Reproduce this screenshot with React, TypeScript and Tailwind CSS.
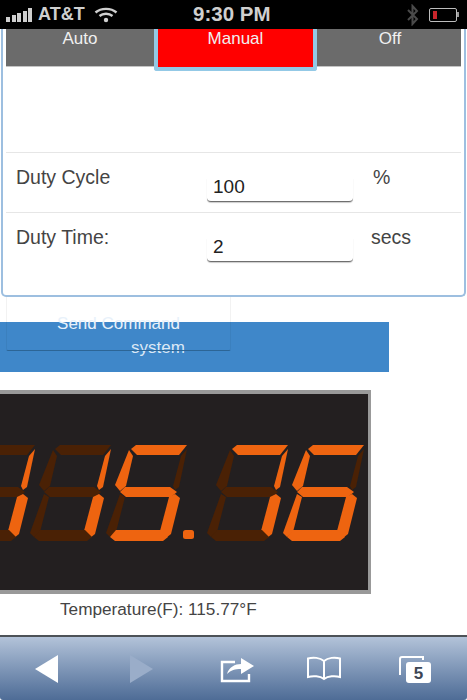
const LIT = "#ee6410";
const DIM = "#4a2105";

// one digit's segments, traced from the right-most digit on the display
const SEGMENTS: Record<string, string> = {
  a: "308,449 313,445 364,445 356,455 314,455",
  f: "306,450 310,456 303,486 297,491 292,485",
  b: "364,449 358,456 350,486 352,490 356,487",
  g: "297,492 302,487 347,487 354,492 348,497 303,497",
  e: "297,494 302,497 293,532 287,537 283,533",
  c: "352,494 357,498 348,534 343,538 337,531 346,497",
  d: "287,537 293,530 338,530 345,537 340,541 292,541",
};

const DIGITS = [
  { dx: -329, on: "bc" },
  { dx: -253, on: "bc" },
  { dx: -177, on: "afgcd" },
  { dx: -76, on: "abc" },
  { dx: 0, on: "afgecd" },
];

function SevenSegment() {
  return (
    <svg viewBox="0 394 368 196" className="block h-[196px] w-[368px]">
      {DIGITS.map((digit) => (
        <g key={digit.dx} transform={`translate(${digit.dx} 0)`}>
          {Object.entries(SEGMENTS).map(([name, points]) => (
            <polygon key={name} points={points} fill={digit.on.includes(name) ? LIT : DIM} />
          ))}
        </g>
      ))}
      <rect x="183" y="530" width="11" height="9" rx="2.5" fill={LIT} />
    </svg>
  );
}

function StatusBar() {
  return (
    <div className="flex h-[29px] shrink-0 items-center bg-black pl-[6px] text-[#cfcfcf]">
      <div className="flex items-end gap-[1.5px]">
        <div className="h-[5px] w-[4px] bg-[#cfcfcf]" />
        <div className="h-[7px] w-[4px] bg-[#cfcfcf]" />
        <div className="h-[9px] w-[4px] bg-[#cfcfcf]" />
        <div className="h-[11px] w-[4px] bg-[#cfcfcf]" />
        <div className="h-[14px] w-[4px] bg-[#cfcfcf]" />
      </div>
      <span className="ml-[6px] w-[56px] text-[18px] font-bold">AT&amp;T</span>
      <svg viewBox="0 0 24 16" className="h-[16px] w-[24px]" fill="none" stroke="#cfcfcf" strokeWidth="2.4">
        <path d="M1.5 5.5C7 .6 17 .6 22.5 5.5" />
        <path d="M5.5 9C9 6 15 6 18.5 9" />
        <circle cx="12" cy="13" r="2.2" fill="#cfcfcf" stroke="none" />
      </svg>
      <span className="ml-[75px] w-[77px] pb-[1px] text-[20.5px] font-bold leading-[24px] whitespace-nowrap">9:30 PM</span>
      <svg viewBox="0 0 12 22" className="ml-[137px] h-[22px] w-[12px]" fill="none" stroke="#4a4a4a" strokeWidth="2">
        <path d="M1 6l9 9-4.500 5V2l4.500 5-9 9" />
      </svg>
      <div className="ml-[10px] flex items-center">
        <div className="flex h-[14px] w-[28px] items-center rounded-[2px] border border-[#bdbdbd] pl-[3px]">
          <div className="h-[8px] w-[4px] bg-[#c8252b]" />
        </div>
        <div className="h-[5px] w-[2px] bg-[#9a9a9a]" />
      </div>
    </div>
  );
}

function FormRow({ label, value, unit, unitClass }: { label: string; value: string; unit: string; unitClass: string }) {
  return (
    <div className="flex h-[60px] items-start border-t border-[#e6e6e6] pl-[10px] text-[19.5px] text-[#444]">
      <span className="mt-[12px] w-[191px] leading-[24px]">{label}</span>
      <input
        defaultValue={value}
        className="mt-[25px] h-[24px] w-[146px] rounded-b-[4px] border-b border-[#6f6f6f] bg-white px-[6px] pb-[5px] text-[19px] leading-[18px] text-[#222] shadow-[0_1px_1px_rgba(0,0,0,0.2)]"
      />
      <span className={`mt-[12px] leading-[24px] ${unitClass}`}>{unit}</span>
    </div>
  );
}

function ControlPanel() {
  return (
    <div className="ml-px h-[268px] w-[465px] shrink-0 rounded-b-[5px] border-x-2 border-b-2 border-[#9dbfe0] px-[3px]">
      <div className="flex h-[123px] items-start text-[17px] leading-[18px] text-[#f0f0f0]">
        <div className="h-[38px] w-[149px] border-b border-[#c4c4c4] bg-[#6b6b6b] pt-[1px] text-center">Auto</div>
        <div className="h-[42px] w-[164px] rounded-b-[3px] border-x-[4px] border-b-[4px] border-[#93c9e6] bg-[#ff0000] pt-[1px] text-center">
          Manual
        </div>
        <div className="h-[38px] w-[145px] border-b border-[#c4c4c4] bg-[#6b6b6b] pl-[2px] pt-[1px] text-center">Off</div>
      </div>
      <FormRow label="Duty Cycle" value="100" unit="%" unitClass="ml-[20px]" />
      <FormRow label="Duty Time:" value="2" unit="secs" unitClass="ml-[18px]" />
    </div>
  );
}

function SendCommand() {
  return (
    <div className="flex shrink-0 flex-col">
      <button className="relative z-10 ml-[6px] h-[54px] w-[225px] rounded-b-[2px] border-x border-b border-x-[#0000000d] border-b-[#2c6596] pt-[1px] text-[17px] leading-[52px] text-[#e8f1fa]">
        Send Command
      </button>
      <div className="-mt-[29px] h-[50px] w-[389px] bg-[#3f87c9] pl-[131px] pt-[16px] text-[17px] leading-[20px] text-[#dbe8f5]">
        system
      </div>
    </div>
  );
}

function Toolbar() {
  return (
    <div className="flex h-[65px] shrink-0 items-center rounded-b-[3px] border-t-2 border-[#4d5257] bg-gradient-to-b from-[#b3c3d9] to-[#4e6c96]">
      <svg viewBox="0 0 23 28" className="ml-[35px] h-[28px] w-[23px]">
        <polygon points="0,14 23,0 23,28" fill="#ffffff" />
      </svg>
      <svg viewBox="0 0 23 28" className="ml-[72px] h-[28px] w-[23px]">
        <polygon points="0,0 23,14 0,28" fill="#9aadc9" />
      </svg>
      <svg viewBox="0 0 35 28" className="ml-[67px] h-[28px] w-[35px]" fill="none" stroke="#ffffff" strokeWidth="2.4">
        <path d="M15 7H2v19h27v-7" />
        <path d="M7 19c2-7 8-10 14-10V3l13 8-13 8v-5c-6 0-10 1-14 5z" fill="#ffffff" stroke="none" />
      </svg>
      <svg viewBox="0 0 36 25" className="ml-[51px] h-[25px] w-[36px]" fill="none" stroke="#ffffff" strokeWidth="2">
        <path d="M18 5C14 1.500 7 1 2 2.500V21c5-1.500 12-1 16 2 4-3 11-3.500 16-2V2.500C29 1 22 1.500 18 5zM18 5v18" />
      </svg>
      <svg viewBox="0 0 33 28" className="ml-[56px] h-[28px] w-[33px]" fill="none">
        <path d="M2 20V4a2 2 0 0 1 2-2h21v3" stroke="#ffffff" strokeWidth="2" />
        <rect x="8" y="7" width="25" height="21" rx="3" fill="#ffffff" />
        <text x="20.500" y="24" textAnchor="middle" fill="#3d4654" className="text-[17px] font-bold">5</text>
      </svg>
    </div>
  );
}

export default function App() {
  return (
    <div className="flex h-[700px] w-[467px] flex-col overflow-hidden bg-white font-['Liberation_Sans',Arial,sans-serif]">
      <StatusBar />
      <ControlPanel />
      <SendCommand />
      <div className="mt-[18px] w-[371px] shrink-0 border-y-4 border-r-[3px] border-[#999999] bg-[#231f20]">
        <SevenSegment />
      </div>
      <p className="ml-[60px] mt-[3px] h-[38px] shrink-0 text-[17.2px] leading-[24px] text-[#444]">Temperature(F): 115.77°F</p>
      <Toolbar />
    </div>
  );
}
